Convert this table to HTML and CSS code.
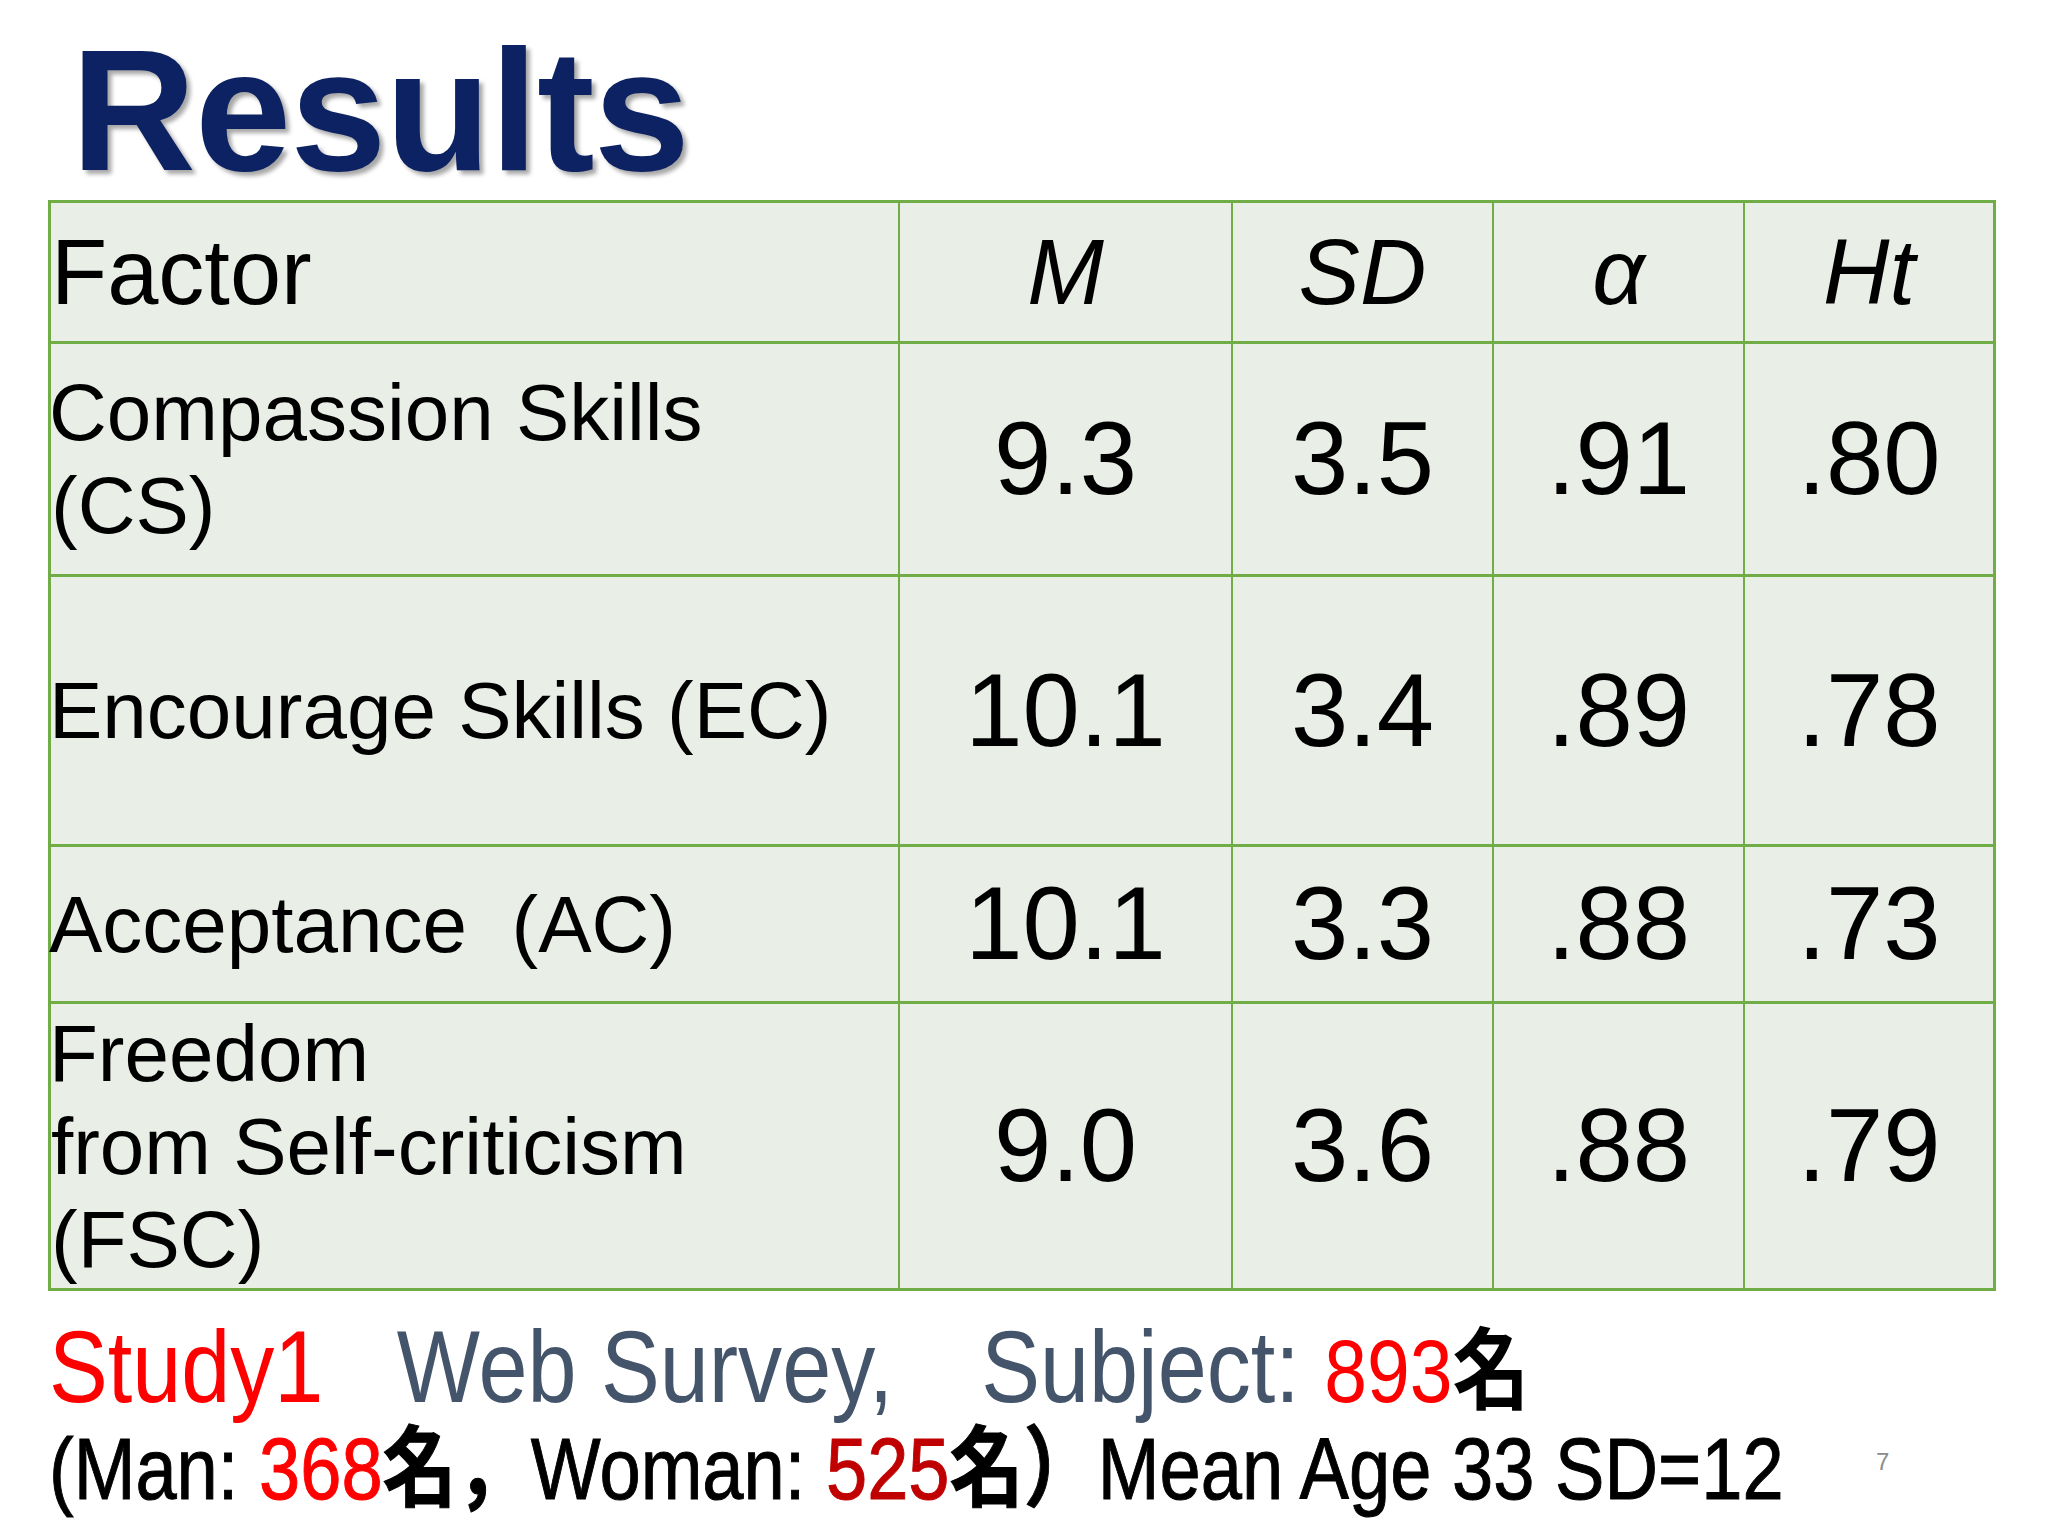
FILE: index.html
```html
<!DOCTYPE html>
<html lang="en">
<head>
  <meta charset="UTF-8">
  <meta name="viewport" content="width=device-width, initial-scale=1.0">
  <title>Results</title>
  <link rel="stylesheet" href="styles.css">
</head>
<body>
  <div class="slide">
    <h1 class="title">Results</h1>

    <table class="stats">
      <colgroup>
        <col class="col-factor">
        <col class="col-m">
        <col class="col-sd">
        <col class="col-alpha">
        <col class="col-ht">
      </colgroup>
      <thead>
        <tr class="row-head">
          <th class="factor">Factor</th>
          <th><i>M</i></th>
          <th><i>SD</i></th>
          <th><i>α</i></th>
          <th><i>Ht</i></th>
        </tr>
      </thead>
      <tbody>
        <tr class="row-cs">
          <td class="factor">Compassion Skills<br>(CS)</td>
          <td>9.3</td>
          <td>3.5</td>
          <td>.91</td>
          <td>.80</td>
        </tr>
        <tr class="row-ec">
          <td class="factor">Encourage Skills (EC)</td>
          <td>10.1</td>
          <td>3.4</td>
          <td>.89</td>
          <td>.78</td>
        </tr>
        <tr class="row-ac">
          <td class="factor">Acceptance&nbsp; (AC)</td>
          <td>10.1</td>
          <td>3.3</td>
          <td>.88</td>
          <td>.73</td>
        </tr>
        <tr class="row-fsc">
          <td class="factor">Freedom<br>from Self-criticism<br>(FSC)</td>
          <td>9.0</td>
          <td>3.6</td>
          <td>.88</td>
          <td>.79</td>
        </tr>
      </tbody>
    </table>

    <div class="study">
      <p class="line line-1"><span class="red">Study1</span>   Web Survey,<span class="kanji">　</span>Subject: <span class="red small">893</span><span class="kanji small">名</span></p>
      <p class="line line-2">(Man: <span class="red">368</span><span class="kanji">名，</span>Woman: <span class="dark-red">525</span><span class="kanji">名）</span>Mean Age 33 SD=12</p>
    </div>

    <span class="page-no">7</span>
  </div>
</body>
</html>
```

FILE: styles.css
```css
body {
  margin: 0;
  background: #fff;
  font-family: "Liberation Sans", Arial, "Noto Sans CJK JP", sans-serif;
  color: #000;
  overflow: hidden;
}
.slide {
  position: relative;
  width: 2048px;
  height: 1536px;
}
.title {
  margin: 0;
  height: 200px;
  box-sizing: border-box;
  padding: 24px 0 0 71px;
  font-size: 173px;
  line-height: 173px;
  font-weight: 700;
  letter-spacing: -1px;
  color: #0c2262;
  text-shadow: 4px 4px 4px rgba(0, 0, 0, 0.35);
}

/* table */
.stats {
  margin-left: 48px;
  width: 1948px;
  table-layout: fixed;
  border-collapse: separate;
  border-spacing: 0;
  background: #e9efe7;
  border-top: 3px solid #70ad47;
  border-left: 3px solid #70ad47;
}
.col-factor { width: 849px; }
.col-m { width: 333px; }
.col-sd { width: 261px; }
.col-alpha { width: 251px; }
.col-ht { width: 251px; }
.stats th,
.stats td {
  padding: 0;
  border-right: 2px solid #70ad47;
  border-bottom: 3px solid #70ad47;
  text-align: center;
  vertical-align: middle;
  font-weight: normal;
  font-size: 103px;
  box-sizing: border-box;
}
.stats th:last-child,
.stats td:last-child {
  border-right-width: 3px;
}
.stats th {
  font-size: 92px;
}
.stats th.factor {
  text-align: left;
}
.stats td.factor {
  text-align: left;
  font-size: 80px;
  line-height: 93px;
  text-indent: -2px;
}
.row-head { height: 141px; }
.row-cs { height: 233px; }
.row-ec { height: 270px; }
.row-ac { height: 157px; }
.row-fsc { height: 287px; }

/* study summary */
.study {
  margin-top: 27px;
  padding-left: 49px;
}
.line {
  margin: 0;
  white-space: pre;
  transform-origin: left center;
}
.line-1 {
  font-size: 102px;
  line-height: 98px;
  color: #44546a;
  transform: scaleX(0.864);
}
.line-2 {
  margin-top: 0;
  font-size: 88px;
  line-height: 98px;
  -webkit-text-stroke-width: 1px;
  transform: scaleX(0.842);
}
.red { color: #ff0000; }
.dark-red { color: #c00000; }
.small { font-size: 89px; }
.kanji {
  color: #000;
  font-family: "Noto Sans CJK JP", sans-serif;
  font-weight: 700;
  line-height: 78px;
}
.page-no {
  position: absolute;
  left: 1876px;
  top: 1448px;
  font-size: 24px;
  color: #8c8c8c;
}
```
